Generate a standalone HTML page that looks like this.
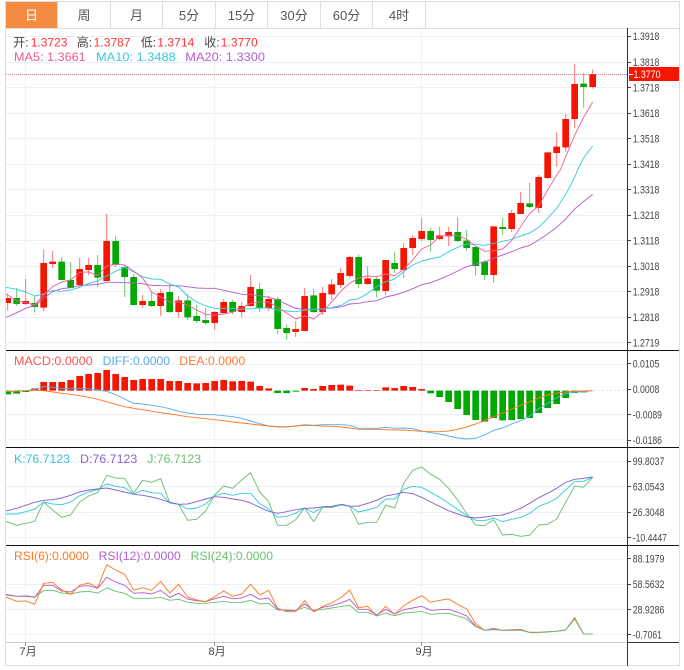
<!DOCTYPE html>
<html lang="zh"><head><meta charset="utf-8"><title>K线</title>
<style>
html,body{margin:0;padding:0;background:#fff;width:684px;height:670px;overflow:hidden}
svg{display:block}
text{font-family:"Liberation Sans","Noto Sans CJK SC",sans-serif}
.ax{font-size:11px;fill:#444}
.h{font-size:12px}
.tab{font-size:13px;fill:#555;text-anchor:middle}
.l{fill:none;stroke-width:2.8;stroke-linejoin:round}
.w{fill:none;stroke-width:3}
.b{fill:none;stroke-width:20}
</style></head><body>
<svg width="684" height="670" viewBox="0 0 684 670" xmlns="http://www.w3.org/2000/svg">
<defs><clipPath id="c"><rect x="18" y="0" width="1866" height="2010"/></clipPath></defs>

<!-- grid -->
<g stroke="#e9eff4" stroke-width="1" fill="none">
<path d="M6 36.5H628M6 62.5H628M6 87.5H628M6 113.5H628M6 138.5H628M6 164.5H628M6 189.5H628M6 215.5H628M6 240.5H628M6 266.5H628M6 291.5H628M6 317.5H628M6 342.5H628"/>
<path d="M6 414.5H628M6 486.5H628M6 512.5H628M6 584.5H628M6 609.5H628"/>
<path stroke="#f2f5f7" d="M6 364.5H628M6 439.5H628M6 461.5H628M6 537.5H628M6 559.5H628M6 634.5H628"/>
<path stroke="#edf2f5" d="M25.5 28V642M214.5 28V642M421.5 28V642"/>
<path stroke="#d9ebf6" stroke-dasharray="2 2" d="M6 390.5H628"/>
</g>

<!-- frame -->
<path d="M5.5 665.5V1.5H679.5V665.5H5.5" fill="none" stroke="#ddd" stroke-width="1"/>
<path d="M6 28.5H679" stroke="#ddd" stroke-width="1"/>
<path d="M57.5 2V28M110.5 2V28M162.5 2V28M215.5 2V28M267.5 2V28M320.5 2V28M372.5 2V28M425.5 2V28" stroke="#ddd" stroke-width="1"/>
<rect x="6" y="2" width="51" height="26" fill="#f48b41"/>
<text x="31.5" y="20" class="tab" style="fill:#fff">日</text>
<text x="84" y="20" class="tab">周</text>
<text x="136.5" y="20" class="tab">月</text>
<text x="189" y="20" class="tab">5分</text>
<text x="241.5" y="20" class="tab">15分</text>
<text x="294" y="20" class="tab">30分</text>
<text x="346.5" y="20" class="tab">60分</text>
<text x="399" y="20" class="tab">4时</text>

<!-- separators / axes -->
<path d="M6 350.5H679M6 447.5H679M6 545.5H679" stroke="#111" stroke-width="1"/>
<path d="M6 642.5H628" stroke="#ccc" stroke-width="1"/>
<path d="M628 642.5H679" stroke="#333" stroke-width="1"/>
<path d="M627.5 28V666" stroke="#333" stroke-width="1"/>
<path stroke="#444" stroke-width="1" d="M628 36.5h3M628 62.5h3M628 87.5h3M628 113.5h3M628 138.5h3M628 164.5h3M628 189.5h3M628 215.5h3M628 240.5h3M628 266.5h3M628 291.5h3M628 317.5h3M628 342.5h3M628 363.5h3M628 389.5h3M628 414.5h3M628 440.5h3M628 461.5h3M628 486.5h3M628 512.5h3M628 537.5h3M628 558.5h3M628 584.5h3M628 609.5h3M628 634.5h3"/>
<path stroke="#999" stroke-width="1" d="M25.5 642v4M214.5 642v4M421.5 642v4"/>

<g transform="scale(.33333)" clip-path="url(#c)">
<!-- candles: left half -->
<g transform="translate(0,510)">
<path class="w" stroke="#f77" d="M23 370V422M77 327V404M131 238V423M158 243V294M239 264V351M266 264V315M320 132V333M428 375V414M482 357V438M536 378V444M644 423V480M671 387V430M725 396V442M752 315V410M806 378V423M887 453V501M914 354V484M968 351V435M995 327V390"/>
<path class="w" stroke="#6cc76c" d="M50 354V408M104 378V428M185 261V330M212 276V354M293 255V351M347 198V291M374 285V381M401 312V405M455 363V411M509 345V429M563 372V450M590 405V459M617 414V465M698 390V432M779 339V426M833 381V492M860 462V510M941 357V429"/>
<path class="b" stroke="#f51500" d="M23 384V399M77 393V402M131 279V413M158 275V282M239 297V345M266 285V300M320 213V333M428 393V405M482 369V408M536 391V426M644 426V459M671 396V429M725 408V426M752 351V408M806 387V414M887 477V486M914 378V483M968 369V426M995 343V373"/>
<path class="b" stroke="#00a800" d="M50 384V402M104 399V411M185 275V330M212 330V354M293 285V323M347 213V285M374 291V321M401 321V405M455 393V408M509 366V426M563 391V442M590 438V453M617 450V459M698 396V426M779 357V414M833 387V477M860 474V489M941 376V426"/>
<polyline class="l" stroke="#b65ccf" points="18,442 50,428 77,415 104,406 131,385 158,365 185,356 212,353 239,347 266,345 293,343 320,337 347,337 374,338 401,339 428,341 455,346 482,347 509,347 536,347 563,350 590,354 617,355 644,355 671,361 698,367 725,373 752,374 779,377 806,382 833,390 860,403 887,415 914,418 941,418 968,416 995,414 1026,410"/>
<polyline class="l" stroke="#35cbe0" points="18,352 50,358 77,366 104,378 131,372 158,361 185,364 212,360 239,352 266,340 293,333 320,318 347,304 374,292 401,306 428,320 455,327 482,328 509,342 536,351 563,378 590,396 617,408 644,415 671,415 698,415 725,418 752,416 779,414 806,414 833,420 860,423 887,425 914,420 941,419 968,417 995,413 1026,405"/>
<polyline class="l" stroke="#f0609c" points="18,372 50,392 77,398 104,405 131,375 158,350 185,336 212,330 239,307 266,306 293,316 320,288 347,283 374,285 401,303 428,324 455,366 482,381 509,396 536,396 563,405 590,420 617,433 644,435 671,432 698,427 725,414 752,400 779,396 806,396 833,412 860,429 887,447 914,438 941,447 968,426 995,396 1026,360"/>
</g>
<!-- candles: right half -->
<g transform="translate(1026,510)">
<path class="w" stroke="#f77" d="M-4 294V354M23 257V324M77 288V345M131 270V375M185 219V324M212 195V255M239 144V213M293 170V210M320 171V228M455 169V339M509 120V186M536 66V132M590 15V129M617 -54V27M644 -114V-10M671 -168V-55M698 -318V-126M752 -301V-244"/>
<path class="w" stroke="#6cc76c" d="M50 254V354M104 320V383M158 245V309M266 173V246M347 143V216M374 180V243M401 231V316M428 270V330M482 144V195M563 39V114M725 -291V-187"/>
<path class="b" stroke="#f51500" d="M-4 309V345M23 261V318M77 325V342M131 270V363M185 234V300M212 204V234M239 183V207M293 196V207M320 186V199M455 169V315M509 129V177M536 99V132M590 21V114M617 -53V24M644 -70V-51M671 -153V-68M698 -258V-153M752 -288V-249"/>
<path class="b" stroke="#00a800" d="M50 261V342M104 327V362M158 279V297M266 183V210M347 186V213M374 212V234M401 231V288M428 275V315M482 171V177M563 100V111M725 -259V-249"/>
<polyline class="l" stroke="#b65ccf" points="0,410 23,402 50,400 77,395 104,392 131,381 158,375 185,367 212,356 239,344 266,338 293,328 320,316 347,303 374,290 401,282 428,276 455,264 482,255 509,245 536,234 563,226 590,210 617,192 644,172 671,147 698,117 725,94 752,73"/>
<polyline class="l" stroke="#35cbe0" points="0,405 23,390 50,386 77,370 104,350 131,335 158,327 185,305 212,285 239,273 266,266 293,261 320,245 347,232 374,222 401,223 428,226 455,220 482,214 509,208 536,198 563,189 590,172 617,145 644,115 671,73 698,22 707,0 725,-37 752,-72"/>
<polyline class="l" stroke="#f0609c" points="0,360 23,340 50,324 77,318 104,320 131,312 158,317 185,298 212,270 239,237 266,225 293,199 320,196 347,197 374,208 401,228 428,244 455,242 482,237 509,212 536,170 563,130 590,108 617,60 644,15 655,0 671,-40 698,-104 725,-158 752,-204"/>
</g>

<!-- MACD left -->
<g transform="translate(0,1035)">
<path class="b" stroke="#f51500" d="M104 130V137M131 111V137M158 111V137M185 111V137M212 105V137M239 93V137M266 87V137M293 84V137M320 75V137M347 87V137M374 96V137M401 105V137M428 102V137M455 102V137M482 102V137M509 108V137M536 108V137M563 114V137M590 115V137M617 114V137M644 108V137M671 105V137M698 109V137M725 108V137M752 110V137M779 123V137M806 130V137M914 129V137M941 132V137M968 123V137M995 120V137"/>
<path class="b" stroke="#00a800" d="M23 137V148M50 137V146M77 137V141M833 137V144M860 137V144M887 137V140"/>
<polyline class="l" stroke="#5aace8" points="18,140 50,138 77,137 104,133 131,125 158,127 185,130 212,131 239,131 266,131 293,135 320,139 347,149 374,162 401,175 428,177 455,181 482,185 509,191 536,199 563,204 590,208 617,209 644,209 671,212 698,215 725,220 752,228 779,236 806,243 833,246 860,246 887,243 914,239 941,241 968,239 995,239 1026,239"/>
<polyline class="l" stroke="#ff7a22" points="18,140 50,138 77,137 104,136 131,137 158,141 185,145 212,148 239,152 266,157 293,163 320,170 347,178 374,185 401,190 428,194 455,199 482,203 509,207 536,211 563,215 590,218 617,221 644,224 671,227 698,231 725,234 752,237 779,240 806,243 833,245 860,245 887,243 914,241 941,242 968,243 995,244 1026,246"/>
</g>
<!-- MACD right -->
<g transform="translate(1026,1035)">
<path class="b" stroke="#f51500" d="M-4 119V137M23 122V137M50 135V137M77 135V137M104 135V137M131 127V137M158 129V137M185 123V137M212 126V137M239 132V137"/>
<path class="b" stroke="#00a800" d="M266 137V145M293 137V156M320 137V171M347 137V192M374 137V210M401 137V225M428 137V230M455 137V219M482 137V226M509 137V225M536 137V222M563 137V219M590 137V204M617 137V189M644 137V177M671 137V159M698 137V144M725 137V142"/>
<polyline class="l" stroke="#5aace8" points="0,239 23,241 50,250 77,250 104,250 131,247 158,250 185,249 212,251 239,258 266,263 293,267 320,273 347,279 374,282 401,280 428,270 455,256 482,249 509,237 536,227 563,214 590,191 617,175 644,158 671,146 698,141 725,140 752,137"/>
<polyline class="l" stroke="#ff7a22" points="0,246 23,249 50,253 77,253 104,253 131,254 158,255 185,255 212,257 239,259 266,260 293,260 320,258 347,253 374,246 401,237 428,227 455,215 482,204 509,192 536,181 563,170 590,159 617,150 644,144 671,141 698,139 725,138 752,137"/>
</g>

<!-- KDJ -->
<g transform="translate(0,1335)">
<polyline class="l" stroke="#6cc070" points="18,229 50,241 77,235 104,229 131,171 158,195 185,217 212,210 239,171 266,153 293,143 320,91 347,99 374,100 401,144 428,106 455,112 482,101 509,172 536,178 563,226 590,223 617,198 644,150 671,123 698,130 725,105 752,83 779,141 806,170 833,241 860,241 887,224 914,189 941,230 968,187 995,188 1026,178"/>
<polyline class="l" stroke="#35cbe0" points="18,207 50,207 77,200 104,192 131,171 158,177 185,179 212,171 239,152 266,141 293,134 320,117 347,124 374,128 401,147 428,136 455,143 482,145 509,174 536,178 563,192 590,189 617,177 644,152 671,145 698,151 725,145 752,145 779,176 806,192 833,217 860,214 887,205 914,189 941,203 968,186 995,185 1026,180"/>
<polyline class="l" stroke="#8763cc" points="18,198 50,190 77,181 104,172 131,166 158,164 185,159 212,151 239,141 266,135 293,132 320,129 347,135 374,141 401,148 428,151 455,156 482,163 509,172 536,178 563,177 590,170 617,162 644,155 671,157 698,162 725,166 752,174 779,187 806,199 833,205 860,200 887,194 914,190 941,189 968,185 995,184 1026,178"/>
</g>
<g transform="translate(1026,1335)">
<polyline class="l" stroke="#6cc070" points="0,178 23,184 50,238 77,232 104,232 131,180 158,189 185,115 212,76 239,66 266,88 293,103 320,130 347,165 374,205 401,240 428,242 455,224 482,270 509,268 536,274 563,271 590,240 617,238 644,222 671,172 698,123 725,127 752,97"/>
<polyline class="l" stroke="#35cbe0" points="0,180 23,184 50,201 77,195 104,187 131,162 158,162 185,133 212,124 239,127 266,142 293,157 320,175 347,193 374,212 401,226 428,227 455,219 482,230 509,223 536,217 563,205 590,184 617,174 644,160 671,135 698,110 725,109 752,97"/>
<polyline class="l" stroke="#8763cc" points="0,178 23,184 50,183 77,175 104,166 131,153 158,148 185,142 212,146 239,157 266,171 293,184 320,197 347,207 374,216 401,219 428,216 455,212 482,210 509,201 536,190 563,175 590,158 617,145 644,130 671,112 698,103 725,100 752,96"/>
</g>

<!-- RSI -->
<g transform="translate(0,1635)">
<polyline class="l" stroke="#6cc070" points="18,150 50,154 77,152 104,156 131,137 158,136 185,144 212,147 239,141 266,139 293,144 320,129 347,139 374,145 401,160 428,160 455,160 482,157 509,166 536,163 563,172 590,175 617,175 644,172 671,169 698,173 725,172 752,166 779,177 806,175 833,195 860,195 887,196 914,187 941,197 968,193 995,189 1026,184"/>
<polyline class="l" stroke="#b65ccf" points="18,148 50,154 77,154 104,157 131,121 158,121 185,138 212,141 239,124 266,122 293,130 320,97 347,111 374,121 401,145 428,143 455,147 482,136 509,157 536,145 563,162 590,167 617,170 644,161 671,154 698,161 725,159 752,148 779,163 806,159 833,193 860,197 887,196 914,177 941,197 968,187 995,182 1026,173"/>
<polyline class="l" stroke="#ff7a22" points="18,156 50,169 77,168 104,178 131,115 158,112 185,135 212,148 239,121 266,114 293,128 320,59 347,75 374,88 401,135 428,128 455,136 482,109 509,144 536,118 563,156 590,165 617,170 644,155 671,138 698,154 725,147 752,118 779,150 806,136 833,190 860,200 887,200 914,167 941,201 968,184 995,174 1026,156"/>
</g>
<g transform="translate(1026,1635)">
<polyline class="l" stroke="#ff7a22" points="0,156 23,135 50,188 77,184 104,212 131,184 158,208 185,182 212,166 239,152 266,172 293,166 320,162 347,178 374,192 401,236 428,256 455,250 482,256 509,254 536,253 563,263 590,263 617,261 644,259 671,255 698,218 725,267 752,267"/>
<polyline class="l" stroke="#b65ccf" points="0,173 23,163 50,193 77,193 104,210 131,193 158,207 185,194 212,189 239,184 266,196 293,194 320,193 347,202 374,213 401,243 428,256 455,252 482,256 509,256 536,255 563,262 590,262 617,260 644,259 671,255 698,221 725,267 752,267"/>
<polyline class="l" stroke="#6cc070" points="0,184 23,181 50,202 77,202 104,213 131,204 158,212 185,204 212,202 239,199 266,208 293,206 320,205 347,213 374,222 401,245 428,256 455,254 482,256 509,256 536,256 563,262 590,262 617,260 644,259 671,255 698,222 725,267 752,267"/>
</g>
</g>

<!-- last price -->
<path d="M6 74.5H628" stroke="#f66" stroke-width="1" stroke-dasharray="1 1" opacity=".75"/>
<rect x="629" y="67" width="50" height="14" fill="#f51500"/>
<path d="M629 74.5h4" stroke="#fff" stroke-width="1"/>
<text x="633.5" y="78" class="ax" style="fill:#fff" textLength="27" lengthAdjust="spacingAndGlyphs">1.3770</text>

<!-- header text -->
<g class="h" fill="#444">
<text x="13.3" y="46.5">开:</text><text x="76.7" y="46.5">高:</text><text x="140.7" y="46.5">低:</text><text x="204.3" y="46.5">收:</text>
</g>
<g class="h" fill="#f33">
<text x="30.7" y="46.5" textLength="36.7">1.3723</text><text x="93.6" y="46.5" textLength="37">1.3787</text><text x="157.3" y="46.5" textLength="37">1.3714</text><text x="220.7" y="46.5" textLength="37">1.3770</text>
</g>
<text class="h" x="14" y="61" fill="#ee5b94" textLength="71.7" lengthAdjust="spacingAndGlyphs">MA5: 1.3661</text>
<text class="h" x="96" y="61" fill="#35cbe0" textLength="79.7" lengthAdjust="spacingAndGlyphs">MA10: 1.3488</text>
<text class="h" x="185.3" y="61" fill="#b65ccf" textLength="79.7" lengthAdjust="spacingAndGlyphs">MA20: 1.3300</text>

<text class="h" x="14" y="365" fill="#f55" textLength="78.7" lengthAdjust="spacingAndGlyphs">MACD:0.0000</text>
<text class="h" x="102.7" y="365" fill="#5aace8" textLength="67.3" lengthAdjust="spacingAndGlyphs">DIFF:0.0000</text>
<text class="h" x="179.3" y="365" fill="#ff7a33" textLength="66" lengthAdjust="spacingAndGlyphs">DEA:0.0000</text>

<text class="h" x="14" y="463" fill="#35c4dc" textLength="56" lengthAdjust="spacingAndGlyphs">K:76.7123</text>
<text class="h" x="80" y="463" fill="#8763cc" textLength="57.3" lengthAdjust="spacingAndGlyphs">D:76.7123</text>
<text class="h" x="147.3" y="463" fill="#6cc070" textLength="53.7" lengthAdjust="spacingAndGlyphs">J:76.7123</text>

<text class="h" x="14" y="560" fill="#ff7a22" textLength="75" lengthAdjust="spacingAndGlyphs">RSI(6):0.0000</text>
<text class="h" x="98.7" y="560" fill="#b65ccf" textLength="82" lengthAdjust="spacingAndGlyphs">RSI(12):0.0000</text>
<text class="h" x="190.7" y="560" fill="#6cc070" textLength="82.3" lengthAdjust="spacingAndGlyphs">RSI(24):0.0000</text>

<!-- axis labels -->
<g class="ax">
<text x="632.7" y="40" textLength="26.7" lengthAdjust="spacingAndGlyphs">1.3918</text>
<text x="632.7" y="66" textLength="26.7" lengthAdjust="spacingAndGlyphs">1.3818</text>
<text x="632.7" y="91.5" textLength="26.7" lengthAdjust="spacingAndGlyphs">1.3718</text>
<text x="632.7" y="117" textLength="26.7" lengthAdjust="spacingAndGlyphs">1.3618</text>
<text x="632.7" y="142.5" textLength="26.7" lengthAdjust="spacingAndGlyphs">1.3518</text>
<text x="632.7" y="168" textLength="26.7" lengthAdjust="spacingAndGlyphs">1.3418</text>
<text x="632.7" y="193.5" textLength="26.7" lengthAdjust="spacingAndGlyphs">1.3318</text>
<text x="632.7" y="219" textLength="26.7" lengthAdjust="spacingAndGlyphs">1.3218</text>
<text x="632.7" y="244.5" textLength="26.7" lengthAdjust="spacingAndGlyphs">1.3118</text>
<text x="632.7" y="270" textLength="26.7" lengthAdjust="spacingAndGlyphs">1.3018</text>
<text x="632.7" y="295.5" textLength="26.7" lengthAdjust="spacingAndGlyphs">1.2918</text>
<text x="632.7" y="321" textLength="26.7" lengthAdjust="spacingAndGlyphs">1.2818</text>
<text x="632.7" y="346.5" textLength="26.7" lengthAdjust="spacingAndGlyphs">1.2719</text>
<text x="632.7" y="367.5" textLength="26.7" lengthAdjust="spacingAndGlyphs">0.0105</text>
<text x="632.7" y="393" textLength="26.7" lengthAdjust="spacingAndGlyphs">0.0008</text>
<text x="632.7" y="418.5" textLength="29.3" lengthAdjust="spacingAndGlyphs">-0.0089</text>
<text x="632.7" y="444" textLength="29.3" lengthAdjust="spacingAndGlyphs">-0.0186</text>
<text x="632.7" y="465" textLength="31.7" lengthAdjust="spacingAndGlyphs">99.8037</text>
<text x="632.7" y="490.5" textLength="31.7" lengthAdjust="spacingAndGlyphs">63.0543</text>
<text x="632.7" y="516" textLength="31.7" lengthAdjust="spacingAndGlyphs">26.3048</text>
<text x="632.7" y="541.5" textLength="34.3" lengthAdjust="spacingAndGlyphs">-10.4447</text>
<text x="632.7" y="562.5" textLength="31.7" lengthAdjust="spacingAndGlyphs">88.1979</text>
<text x="632.7" y="588" textLength="31.7" lengthAdjust="spacingAndGlyphs">58.5632</text>
<text x="632.7" y="613.5" textLength="31.7" lengthAdjust="spacingAndGlyphs">28.9286</text>
<text x="632.7" y="638.5" textLength="29.3" lengthAdjust="spacingAndGlyphs">-0.7061</text>
<text x="19.5" y="655">7月</text>
<text x="208.5" y="655">8月</text>
<text x="415.5" y="655">9月</text>
</g>
</svg>
</body></html>
